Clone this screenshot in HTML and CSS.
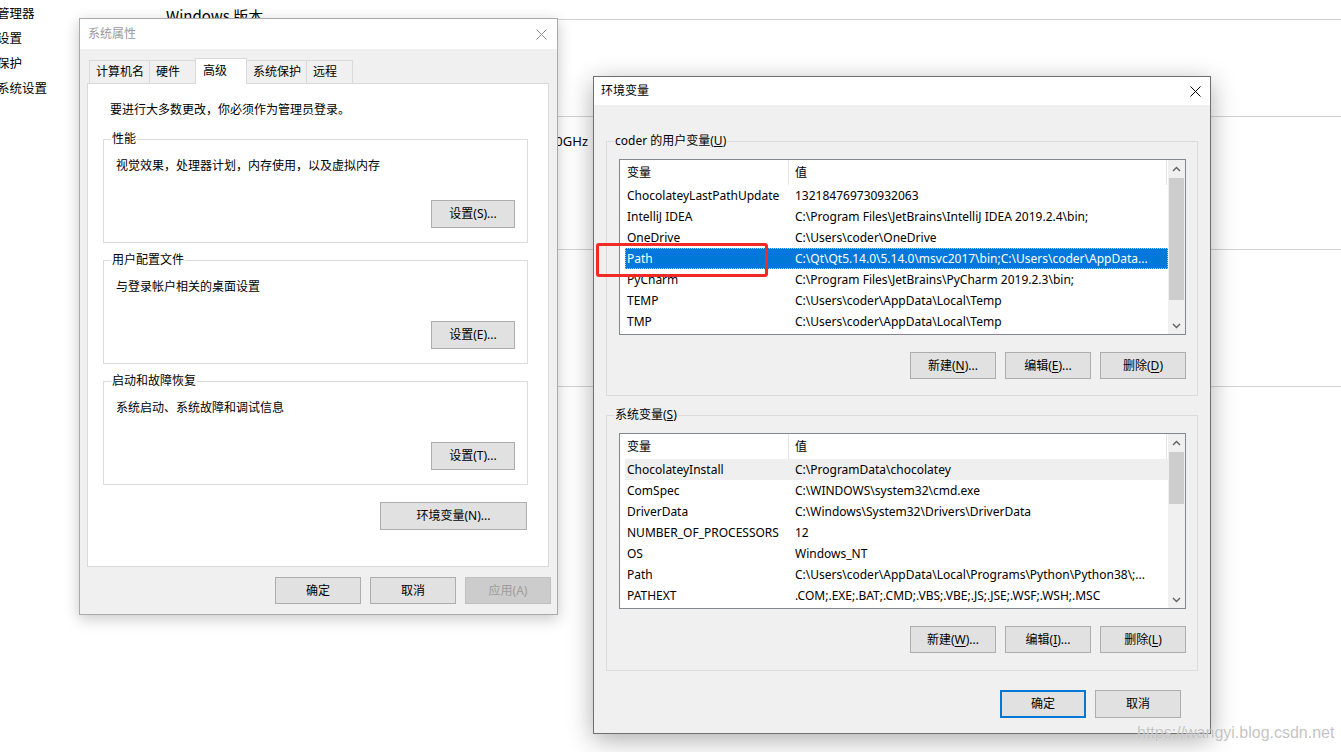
FILE: index.html
```html
<!DOCTYPE html>
<html lang="zh-CN">
<head>
<meta charset="utf-8">
<title>环境变量</title>
<link rel="stylesheet" href="styles.css">
</head>
<body>
<div class="page">
  <nav class="side">
    <div class="side-item">设备管理器</div>
    <div class="side-item">远程设置</div>
    <div class="side-item">系统保护</div>
    <div class="side-item">高级系统设置</div>
  </nav>
  <main class="main">
    <div class="sec sec-head"><h2 class="sec-title">Windows 版本</h2></div>
    <div class="sec sec-a"></div>
    <div class="sec sec-b"><div class="spec-val">Intel(R) Core(TM) i7-8750H CPU @ 2.20GHz</div></div>
    <div class="sec sec-c"></div>
  </main>
</div>

<section class="win win-sys">
  <header class="titlebar titlebar-sys">
    <span class="title-text title-inactive">系统属性</span>
    <svg class="close" width="11" height="11" viewBox="0 0 11 11"><path d="M0.5 0.5L10.5 10.5M10.5 0.5L0.5 10.5" stroke="#8a8a8a" stroke-width="1" fill="none"/></svg>
  </header>
  <div class="sys-body">
    <div class="tabs">
      <div class="tab">计算机名</div>
      <div class="tab">硬件</div>
      <div class="tab tab-active">高级</div>
      <div class="tab">系统保护</div>
      <div class="tab">远程</div>
    </div>
    <div class="panel">
      <p class="intro">要进行大多数更改，你必须作为管理员登录。</p>
      <fieldset class="group">
        <legend>性能</legend>
        <div class="g-desc">视觉效果，处理器计划，内存使用，以及虚拟内存</div>
        <div class="g-actions"><button class="btn btn-set">设置(S)...</button></div>
      </fieldset>
      <fieldset class="group">
        <legend>用户配置文件</legend>
        <div class="g-desc">与登录帐户相关的桌面设置</div>
        <div class="g-actions"><button class="btn btn-set">设置(E)...</button></div>
      </fieldset>
      <fieldset class="group">
        <legend>启动和故障恢复</legend>
        <div class="g-desc">系统启动、系统故障和调试信息</div>
        <div class="g-actions"><button class="btn btn-set">设置(T)...</button></div>
      </fieldset>
      <div class="env-row"><button class="btn btn-env">环境变量(N)...</button></div>
    </div>
    <div class="sys-foot">
      <button class="btn btn-foot">确定</button>
      <button class="btn btn-foot">取消</button>
      <button class="btn btn-foot btn-disabled">应用(A)</button>
    </div>
  </div>
</section>

<section class="win win-env">
  <header class="titlebar titlebar-env">
    <span class="title-text">环境变量</span>
    <svg class="close" width="11" height="11" viewBox="0 0 11 11"><path d="M0.5 0.5L10.5 10.5M10.5 0.5L0.5 10.5" stroke="#000" stroke-width="1" fill="none"/></svg>
  </header>
  <div class="env-body">
    <fieldset class="group env-group">
      <legend>coder 的用户变量(<u>U</u>)</legend>
      <div class="list">
        <div class="lv">
          <div class="lv-head"><div class="c1">变量</div><div class="c2">值</div></div>
          <div class="lv-row"><div class="c1">ChocolateyLastPathUpdate</div><div class="c2">132184769730932063</div></div>
          <div class="lv-row"><div class="c1">IntelliJ IDEA</div><div class="c2">C:\Program Files\JetBrains\IntelliJ IDEA 2019.2.4\bin;</div></div>
          <div class="lv-row"><div class="c1">OneDrive</div><div class="c2">C:\Users\coder\OneDrive</div></div>
          <div class="lv-row lv-selected"><div class="c1">Path</div><div class="c2">C:\Qt\Qt5.14.0\5.14.0\msvc2017\bin;C:\Users\coder\AppData...</div></div>
          <div class="lv-row"><div class="c1">PyCharm</div><div class="c2">C:\Program Files\JetBrains\PyCharm 2019.2.3\bin;</div></div>
          <div class="lv-row"><div class="c1">TEMP</div><div class="c2">C:\Users\coder\AppData\Local\Temp</div></div>
          <div class="lv-row"><div class="c1">TMP</div><div class="c2">C:\Users\coder\AppData\Local\Temp</div></div>
        </div>
        <div class="sb">
          <div class="sb-btn"><svg width="9" height="6" viewBox="0 0 9 6"><path d="M1 5L4.5 1.5L8 5" stroke="#606060" stroke-width="1.4" fill="none"/></svg></div>
          <div class="sb-track"><div class="sb-thumb thumb-user"></div></div>
          <div class="sb-btn"><svg width="9" height="6" viewBox="0 0 9 6"><path d="M1 1L4.5 4.5L8 1" stroke="#606060" stroke-width="1.4" fill="none"/></svg></div>
        </div>
      </div>
      <div class="list-actions">
        <button class="btn btn-env-sm">新建(<u>N</u>)...</button>
        <button class="btn btn-env-sm">编辑(<u>E</u>)...</button>
        <button class="btn btn-env-sm">删除(<u>D</u>)</button>
      </div>
    </fieldset>
    <fieldset class="group env-group env-group-2">
      <legend>系统变量(<u>S</u>)</legend>
      <div class="list">
        <div class="lv">
          <div class="lv-head"><div class="c1">变量</div><div class="c2">值</div></div>
          <div class="lv-row lv-hover"><div class="c1">ChocolateyInstall</div><div class="c2">C:\ProgramData\chocolatey</div></div>
          <div class="lv-row"><div class="c1">ComSpec</div><div class="c2">C:\WINDOWS\system32\cmd.exe</div></div>
          <div class="lv-row"><div class="c1">DriverData</div><div class="c2">C:\Windows\System32\Drivers\DriverData</div></div>
          <div class="lv-row"><div class="c1">NUMBER_OF_PROCESSORS</div><div class="c2">12</div></div>
          <div class="lv-row"><div class="c1">OS</div><div class="c2">Windows_NT</div></div>
          <div class="lv-row"><div class="c1">Path</div><div class="c2">C:\Users\coder\AppData\Local\Programs\Python\Python38\;...</div></div>
          <div class="lv-row"><div class="c1">PATHEXT</div><div class="c2">.COM;.EXE;.BAT;.CMD;.VBS;.VBE;.JS;.JSE;.WSF;.WSH;.MSC</div></div>
        </div>
        <div class="sb">
          <div class="sb-btn"><svg width="9" height="6" viewBox="0 0 9 6"><path d="M1 5L4.5 1.5L8 5" stroke="#606060" stroke-width="1.4" fill="none"/></svg></div>
          <div class="sb-track"><div class="sb-thumb thumb-sys"></div></div>
          <div class="sb-btn"><svg width="9" height="6" viewBox="0 0 9 6"><path d="M1 1L4.5 4.5L8 1" stroke="#606060" stroke-width="1.4" fill="none"/></svg></div>
        </div>
      </div>
      <div class="list-actions list-actions-2">
        <button class="btn btn-env-sm">新建(<u>W</u>)...</button>
        <button class="btn btn-env-sm">编辑(<u>I</u>)...</button>
        <button class="btn btn-env-sm">删除(<u>L</u>)</button>
      </div>
    </fieldset>
    <div class="env-foot">
      <button class="btn btn-env-foot btn-default">确定</button>
      <button class="btn btn-env-foot">取消</button>
    </div>
  </div>
</section>

<div class="mark-box"></div>
<div class="watermark">https://wangyi.blog.csdn.net</div>
</body>
</html>
```

FILE: styles.css
```css
* { box-sizing: border-box; }
html, body { margin: 0; padding: 0; }
body {
  width: 1341px;
  height: 752px;
  overflow: hidden;
  position: relative;
  background: #fff;
  color: #000;
  font-family: "Noto Sans", "Noto Sans CJK SC", sans-serif;
  font-size: 12px;
}

/* background settings page */
.page { display: flex; height: 752px; }
.side {
  flex: 0 0 194px;
  margin-left: -28px;
  padding-top: 0;
  font-family: "Noto Sans CJK SC", sans-serif;
  font-size: 12.5px;
  line-height: 25px;
  white-space: nowrap;
}
.main { flex: 1; }
.sec { border-bottom: 1px solid #d2d2d2; }
.sec-head { height: 20px; overflow: hidden; padding-top: 6px; }
.sec-title {
  margin: 0;
  font-family: "Noto Sans CJK SC", sans-serif;
  font-size: 15px;
  font-weight: normal;
  line-height: 20px;
}
.sec-a { height: 97px; }
.sec-b { height: 133px; padding-top: 15px; }
.spec-val {
  width: 422px;
  text-align: right;
  white-space: nowrap;
  font-size: 13px;
  line-height: 18px;
}
.sec-c { height: 137px; }

/* windows */
.win { position: absolute; background: #f0f0f0; }
.win-sys {
  left: 79px;
  top: 18px;
  width: 479px;
  border: 1px solid #aaaaaa;
  box-shadow: 0 4px 14px rgba(0, 0, 0, 0.22);
  z-index: 2;
}
.win-env {
  left: 593px;
  top: 76px;
  width: 618px;
  border: 1px solid #6f6f6f;
  box-shadow: 0 6px 24px rgba(0, 0, 0, 0.32);
  z-index: 3;
}
.titlebar {
  display: flex;
  align-items: center;
  justify-content: space-between;
  background: #fff;
}
.titlebar-sys { height: 30px; padding: 0 10px 0 8px; }
.titlebar-env { height: 28px; padding: 0 9px 0 7px; }
.title-text { line-height: 16px; }
.title-inactive { color: #9a9a9a; }
.close { display: block; }

/* system properties */
.sys-body { padding: 9px 8px 10px 7px; }
.tabs {
  display: flex;
  align-items: flex-end;
  height: 25px;
  padding-left: 2px;
  position: relative;
  z-index: 1;
}
.tab {
  height: 23px;
  min-width: 47px;
  padding: 0 5px 0 6px;
  margin-right: -1px;
  border: 1px solid #d9d9d9;
  border-bottom: none;
  background: #f0f0f0;
  line-height: 22px;
  white-space: nowrap;
}
.tab-active {
  height: 26px;
  min-width: 52px;
  padding-left: 7px;
  margin-bottom: -1px;
  background: #fff;
  line-height: 23px;
  position: relative;
}
.panel {
  height: 484px;
  background: #fff;
  border: 1px solid #d9d9d9;
  padding: 18px 20px 0 15px;
}
.intro { margin: 0 0 13px 7px; line-height: 16px; }

.group {
  margin: 0;
  padding: 0;
  min-width: 0;
  border: 1px solid #dcdcdc;
}
.group legend {
  margin-left: 7px;
  padding: 0 1px;
  line-height: 16px;
}
.group + .group { margin-top: 9px; }
.g-desc { margin: 11px 0 0 12px; line-height: 16px; }
.g-actions {
  display: flex;
  justify-content: flex-end;
  margin-top: 26px;
  padding: 0 12px 14px 0;
}
.env-row { display: flex; justify-content: flex-end; margin-top: 17px; padding-right: 1px; }

.btn {
  display: inline-flex;
  align-items: center;
  justify-content: center;
  margin: 0;
  padding: 0 6px;
  background: #e1e1e1;
  border: 1px solid #adadad;
  border-radius: 0;
  color: #000;
  font: inherit;
  line-height: 16px;
  white-space: nowrap;
}
.btn u { text-decoration-thickness: 1px; text-underline-offset: 2px; }
.btn-set { width: 84px; height: 28px; }
.btn-env { width: 147px; height: 28px; }
.sys-foot {
  display: flex;
  justify-content: flex-end;
  gap: 9px;
  margin: 10px -2px 0 0;
}
.btn-foot { width: 86px; height: 27px; }
.btn-disabled { background: #cccccc; border-color: #bfbfbf; color: #9d9d9d; }

/* environment variables */
.env-body { padding: 28px 12px 15px 12px; }
.env-group { padding: 0 11px 16px 12px; }
.env-group legend { margin-left: -5px; }
.group.env-group-2 { margin-top: 11px; padding-bottom: 17px; }
.list {
  display: flex;
  height: 176px;
  margin-top: 10px;
  background: #fff;
  border: 1px solid #828790;
}
.lv { flex: 1; padding-left: 5px; min-width: 0; }
.lv-head, .lv-row { display: flex; white-space: nowrap; }
.lv-head { height: 25px; line-height: 25px; border-right: 1px solid #e5e5e5; margin-right: 1px; }
.lv-head .c1 { border-right: 1px solid #e5e5e5; }
.lv-row { height: 21px; line-height: 21px; }
.c1 { flex: 0 0 164px; padding-left: 2px; overflow: hidden; }
.c2 { flex: 1; padding-left: 6px; overflow: hidden; }
.lv-selected {
  background: #0078d7;
  color: #fff;
  outline: 1px dotted #f4c46a;
  outline-offset: -1px;
}
.lv-hover { background: #efefef; }

.sb {
  flex: 0 0 17px;
  display: flex;
  flex-direction: column;
  background: #f0f0f0;
  height: 174px;
}
.sb-btn {
  height: 17px;
  display: flex;
  align-items: center;
  justify-content: center;
}
.sb-btn svg { display: block; }
.sb-track { flex: 1; padding: 1px 1px 0 1px; }
.sb-thumb { background: #cdcdcd; }
.thumb-user { height: 122px; }
.thumb-sys { height: 52px; }

.list-actions {
  display: flex;
  justify-content: flex-end;
  gap: 9px;
  margin-top: 17px;
}
.btn-env-sm { width: 86px; height: 27px; }
.env-foot {
  display: flex;
  justify-content: flex-end;
  gap: 9px;
  margin: 19px 17px 0 0;
}
.btn-env-foot { width: 86px; height: 28px; }
.btn-default { border: 2px solid #0078d7; }

/* overlays */
.mark-box {
  position: absolute;
  left: 596px;
  top: 243px;
  width: 172px;
  height: 34px;
  border: 3px solid #f02a24;
  border-radius: 3px;
  z-index: 5;
}
.watermark {
  position: absolute;
  left: 1137px;
  top: 723px;
  font-family: "Liberation Sans", sans-serif;
  font-size: 16px;
  line-height: 20px;
  color: rgba(175, 175, 175, 0.75);
  text-shadow: 0 0 1px rgba(255, 255, 255, 0.9);
  z-index: 6;
  white-space: nowrap;
}
```
